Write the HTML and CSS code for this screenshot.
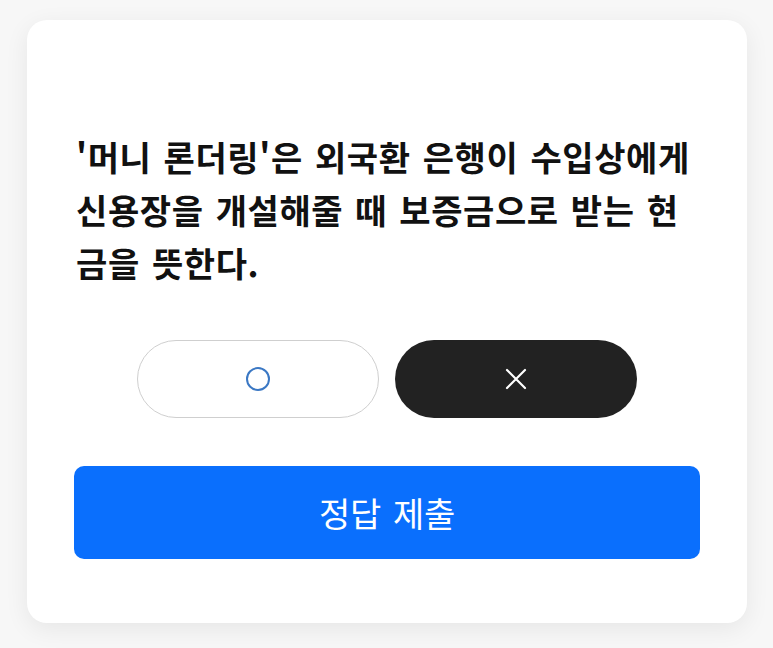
FILE: index.html
```html
<!DOCTYPE html>
<html lang="ko">
<head>
  <meta charset="UTF-8">
  <title>OX 퀴즈</title>
  <link rel="stylesheet" href="styles.css">
</head>
<body>

<div class="card">
  <p class="question">'머니 론더링'은 외국환 은행이 수입상에게 신용장을 개설해줄 때 보증금으로 받는 현금을 뜻한다.</p>

  <!-- O / X choices -->
  <div class="choices">
    <button class="choice choice-o">
      <svg width="26" height="26" viewBox="0 0 26 26"><circle cx="13" cy="13" r="11" fill="none" stroke="#3b78c4" stroke-width="2"/></svg>
    </button>
    <button class="choice choice-x">
      <svg width="22" height="22" viewBox="0 0 22 22"><path d="M2 2 L20 20 M20 2 L2 20" stroke="#fff" stroke-width="2.2" stroke-linecap="round"/></svg>
    </button>
  </div>

  <button class="submit">정답 제출</button>
</div>

</body>
</html>
```

FILE: styles.css
```css
* {
  box-sizing: border-box;
  margin: 0;
  padding: 0;
}
body {
  font-family: "Noto Sans CJK KR", "Noto Sans", sans-serif;
  background-color: #f7f7f7;
  color: #111;
  padding: 20px 26px 25px 27px;
}
.card {
  background-color: #fff;
  border-radius: 20px;
  box-shadow: 0 6px 24px rgba(0, 0, 0, 0.07);
  height: 603px;
  padding: 110px 47px 0 47px;
}
.question {
  font-size: 34px;
  font-weight: bold;
  line-height: 53px;
  word-break: break-all;
  padding-left: 2px;
  letter-spacing: 0.6px;
  word-spacing: 2px;
}

/* O / X buttons */
.choices {
  display: flex;
  justify-content: center;
  gap: 16px;
  margin-top: 51px;
}
.choice {
  width: 242px;
  height: 78px;
  border-radius: 39px;
  display: flex;
  justify-content: center;
  align-items: center;
  cursor: pointer;
}
.choice-o {
  background: #fff;
  border: 1.5px solid #cfcfcf;
}
.choice-x {
  background: #222;
  border: none;
}

/* Submit */
.submit {
  display: block;
  width: 100%;
  height: 93px;
  margin-top: 48px;
  background-color: #0a6ffd;
  color: #fff;
  border: none;
  border-radius: 10px;
  font-family: inherit;
  font-size: 34px;
  font-weight: 400;
  letter-spacing: -0.3px;
  word-spacing: 3px;
  cursor: pointer;
}
```
